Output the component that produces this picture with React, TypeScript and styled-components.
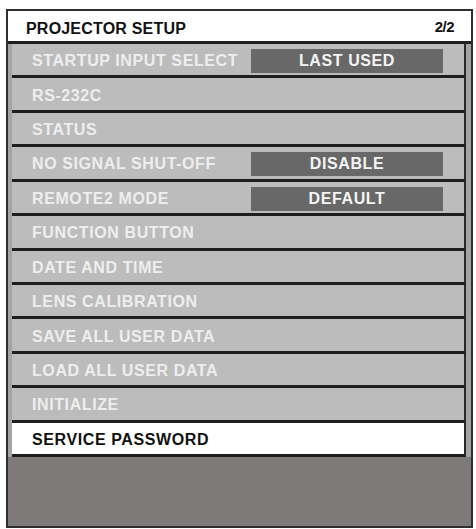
import * as React from 'react'
import styled, { createGlobalStyle } from 'styled-components'

const GlobalStyle = createGlobalStyle`
  html, body {
    margin: 0;
    padding: 0;
    background: #ffffff;
  }
  body {
    font-family: "Liberation Sans", Arial, sans-serif;
  }
`

type Item = {
  label: string
  value?: string
  selected?: boolean
}

const items: Item[] = [
  { label: 'STARTUP INPUT SELECT', value: 'LAST USED' },
  { label: 'RS-232C' },
  { label: 'STATUS' },
  { label: 'NO SIGNAL SHUT-OFF', value: 'DISABLE' },
  { label: 'REMOTE2 MODE', value: 'DEFAULT' },
  { label: 'FUNCTION BUTTON' },
  { label: 'DATE AND TIME' },
  { label: 'LENS CALIBRATION' },
  { label: 'SAVE ALL USER DATA' },
  { label: 'LOAD ALL USER DATA' },
  { label: 'INITIALIZE' },
  { label: 'SERVICE PASSWORD', selected: true }
]

const Frame = styled.div`
  box-sizing: border-box;
  margin: 9px 0 0 6px;
  width: 467px;
  height: 519px;
  border: 2px solid #2e2e2e;
  display: flex;
  flex-direction: column;
  background: #7e7a7a;
`

const Header = styled.div`
  box-sizing: border-box;
  height: 33px;
  flex: none;
  display: flex;
  align-items: center;
  justify-content: space-between;
  padding: 6px 17px 0 18px;
  background: #ffffff;
  border-bottom: 3px solid #1e1e1e;
  color: #111;
  font-weight: bold;
  line-height: 1;
`

const Title = styled.span`
  font-size: 16px;
  letter-spacing: 0.2px;
`

const Page = styled.span`
  font-size: 15px;
  letter-spacing: -0.5px;
  margin-top: -5px;
`

const List = styled.div`
  height: 413px;
  flex: none;
  display: flex;
  flex-direction: column;
  padding: 0 5px 0 4px;
  background: #a4a4a4;
`

const Row = styled.div<{ $selected?: boolean }>`
  box-sizing: border-box;
  flex: 1;
  display: flex;
  align-items: center;
  padding: 3px 0 0 20px;
  background: ${p => (p.$selected ? '#ffffff' : '#bcbcbc')};
  border-right: 2px solid #2a2a2a;
  border-bottom: 3px solid #1e1e1e;
  color: ${p => (p.$selected ? '#111' : '#eeeeee')};
  font-size: 16px;
  font-weight: bold;
  letter-spacing: 0.6px;
  line-height: 1;
`

const Label = styled.span`
  width: 219px;
  flex: none;
  white-space: nowrap;
`

const Value = styled.span`
  width: 192px;
  height: 24px;
  display: flex;
  align-items: center;
  justify-content: center;
  background: #686868;
  color: #f4f4f4;
  font-size: 16px;
  font-weight: bold;
  letter-spacing: 0.6px;
`

const Blank = styled.div`
  flex: 1;
  background: #7e7a7a;
`

export default function App() {
  return (
    <>
      <GlobalStyle />
      <Frame>
        <Header>
          <Title>PROJECTOR SETUP</Title>
          <Page>2/2</Page>
        </Header>
        <List>
          {items.map(item => (
            <Row key={item.label} $selected={item.selected}>
              <Label>{item.label}</Label>
              {item.value && <Value>{item.value}</Value>}
            </Row>
          ))}
        </List>
        <Blank />
      </Frame>
    </>
  )
}
